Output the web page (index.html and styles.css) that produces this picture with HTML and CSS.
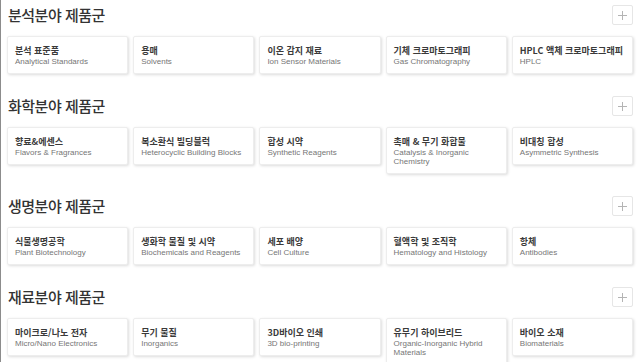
FILE: index.html
```html
<!DOCTYPE html>
<html lang="ko">
<head>
  <meta charset="UTF-8">
  <meta name="viewport" content="width=device-width, initial-scale=1.0">
  <title>제품군</title>
  <link rel="stylesheet" href="styles.css">
</head>
<body>
  <div class="page">

    <div class="section">
      <div class="section-head">
        <h2>분석분야 제품군</h2>
        <button class="more-btn"><svg width="9" height="9" viewBox="0 0 9 9"><path d="M4.5 0V9M0 4.5H9" stroke="#b4b4b4" stroke-width="1"/></svg></button>
      </div>
      <ul class="cards">
        <li class="card"><div class="ko">분석 표준품</div><div class="en">Analytical Standards</div></li>
        <li class="card"><div class="ko">용매</div><div class="en">Solvents</div></li>
        <li class="card"><div class="ko">이온 감지 재료</div><div class="en">Ion Sensor Materials</div></li>
        <li class="card"><div class="ko">기체 크로마토그래피</div><div class="en">Gas Chromatography</div></li>
        <li class="card"><div class="ko">HPLC 액체 크로마토그래피</div><div class="en">HPLC</div></li>
      </ul>
    </div>

    <div class="section">
      <div class="section-head">
        <h2>화학분야 제품군</h2>
        <button class="more-btn"><svg width="9" height="9" viewBox="0 0 9 9"><path d="M4.5 0V9M0 4.5H9" stroke="#b4b4b4" stroke-width="1"/></svg></button>
      </div>
      <ul class="cards">
        <li class="card"><div class="ko">향료&amp;에센스</div><div class="en">Flavors &amp; Fragrances</div></li>
        <li class="card"><div class="ko">복소환식 빌딩블럭</div><div class="en">Heterocyclic Building Blocks</div></li>
        <li class="card"><div class="ko">합성 시약</div><div class="en">Synthetic Reagents</div></li>
        <li class="card"><div class="ko">촉매 &amp; 무기 화합물</div><div class="en">Catalysis &amp; Inorganic Chemistry</div></li>
        <li class="card"><div class="ko">비대칭 합성</div><div class="en">Asymmetric Synthesis</div></li>
      </ul>
    </div>

    <div class="section">
      <div class="section-head">
        <h2>생명분야 제품군</h2>
        <button class="more-btn"><svg width="9" height="9" viewBox="0 0 9 9"><path d="M4.5 0V9M0 4.5H9" stroke="#b4b4b4" stroke-width="1"/></svg></button>
      </div>
      <ul class="cards">
        <li class="card"><div class="ko">식물생명공학</div><div class="en">Plant Biotechnology</div></li>
        <li class="card"><div class="ko">생화학 물질 및 시약</div><div class="en">Biochemicals and Reagents</div></li>
        <li class="card"><div class="ko">세포 배양</div><div class="en">Cell Culture</div></li>
        <li class="card"><div class="ko">혈액학 및 조직학</div><div class="en">Hematology and Histology</div></li>
        <li class="card"><div class="ko">항체</div><div class="en">Antibodies</div></li>
      </ul>
    </div>

    <div class="section">
      <div class="section-head">
        <h2>재료분야 제품군</h2>
        <button class="more-btn"><svg width="9" height="9" viewBox="0 0 9 9"><path d="M4.5 0V9M0 4.5H9" stroke="#b4b4b4" stroke-width="1"/></svg></button>
      </div>
      <ul class="cards">
        <li class="card"><div class="ko">마이크로/나노 전자</div><div class="en">Micro/Nano Electronics</div></li>
        <li class="card"><div class="ko">무기 물질</div><div class="en">Inorganics</div></li>
        <li class="card"><div class="ko">3D바이오 인쇄</div><div class="en">3D bio-printing</div></li>
        <li class="card"><div class="ko">유무기 하이브리드</div><div class="en">Organic-Inorganic Hybrid Materials</div></li>
        <li class="card"><div class="ko">바이오 소재</div><div class="en">Biomaterials</div></li>
      </ul>
    </div>

  </div>
</body>
</html>
```

FILE: styles.css
```css
* {
  box-sizing: border-box;
  margin: 0;
  padding: 0;
}

body {
  font-family: "Noto Sans CJK KR", "Liberation Sans", sans-serif;
  color: #333;
  background: #fff;
}

.page {
  border-left: 1px solid #8c8c8c;
  min-height: 362px;
  padding: 5px 7px 0 6px;
}

.section {
  margin-bottom: 22px;
}

.section-head {
  display: flex;
  align-items: center;
  justify-content: space-between;
  height: 20px;
  margin-bottom: 11px;
}

.section-head h2 {
  font-size: 15px;
  font-weight: 500;
  letter-spacing: -0.5px;
  color: #333;
  line-height: 20px;
  padding-left: 1px;
}

.more-btn {
  width: 21px;
  height: 20px;
  display: flex;
  align-items: center;
  justify-content: center;
  background: #fff;
  border: 1px solid #e6e6e6;
  border-radius: 2px;
  cursor: pointer;
}

.cards {
  list-style: none;
  display: grid;
  grid-template-columns: repeat(5, 1fr);
  gap: 5px;
  align-items: start;
}

.card {
  background: #fff;
  border: 1px solid #ededed;
  border-radius: 2px;
  box-shadow: 1px 1px 3px rgba(0, 0, 0, 0.14);
  padding: 8px 7px 7px;
}

.ko {
  font-size: 9px;
  font-weight: bold;
  line-height: 12px;
  color: #3a3a3a;
}

.en {
  font-family: "Liberation Sans", sans-serif;
  font-size: 8px;
  line-height: 9px;
  color: #767676;
}
```
